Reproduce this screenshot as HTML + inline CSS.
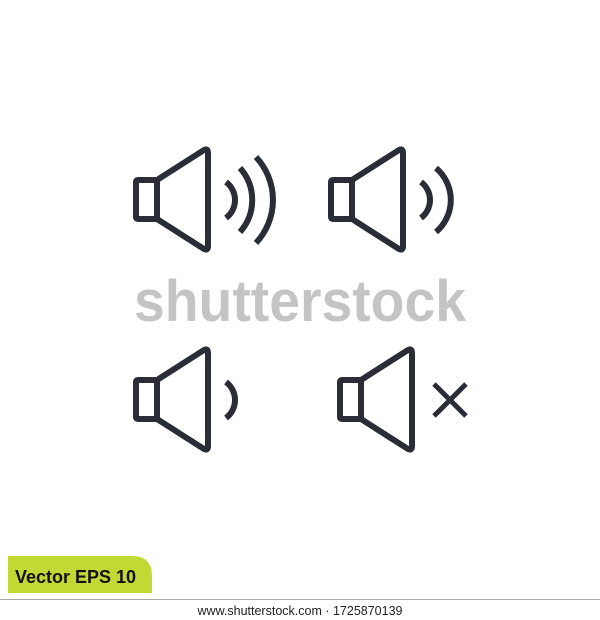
<!DOCTYPE html>
<html><head><style>
html,body{margin:0;padding:0;background:#fff;width:600px;height:620px;overflow:hidden;font-family:"Liberation Sans",sans-serif}
</style></head><body>
<svg width="600" height="620" viewBox="0 0 600 620" xmlns="http://www.w3.org/2000/svg" style="position:absolute;left:0;top:0">
<defs>
<g id="spk" fill="none" stroke="#2a2d36" stroke-width="6" stroke-linejoin="round" stroke-linecap="butt">
<path d="M157 180 H138 Q136 180 136 182 V217 Q136 219 138 219 H157 Z"/>
<path d="M157 180 L204 150 Q208 148 208 153 V246 Q208 251 204 249 L157 219 Z"/>
</g>
</defs>
<g fill="none" stroke="#2a2d36" stroke-width="6">
<use href="#spk"/>
<path d="M226 182 A22.5 22.5 0 0 1 226 218"/>
<path d="M240 168 A48 48 0 0 1 240 232"/>
<path d="M256 157 A63 63 0 0 1 256 243"/>
<use href="#spk" x="195"/>
<path d="M421 182 A22.5 22.5 0 0 1 421 218"/>
<path d="M436 168 A42 42 0 0 1 436 232"/>
<use href="#spk" y="200"/>
<path d="M226 382 A22.5 22.5 0 0 1 226 418"/>
<use href="#spk" x="204" y="200"/>
<path d="M434 384 L466 416 M466 384 L434 416" stroke-width="5"/>
</g>
<text x="134" y="321" font-family="Liberation Sans, sans-serif" font-weight="bold" font-size="58" fill="#c4c4c4" textLength="332" lengthAdjust="spacingAndGlyphs">shutterstock</text>
<path d="M8 556 H132 Q152 556 152 576 V593 H8 Z" fill="#c2d834"/>
<text x="15" y="583" font-family="Liberation Sans, sans-serif" font-weight="bold" font-size="18" fill="#111" textLength="121" lengthAdjust="spacingAndGlyphs">Vector EPS 10</text>
<rect x="0" y="599" width="600" height="1" fill="#aaa"/>
<text x="300" y="615" text-anchor="middle" font-family="Liberation Sans, sans-serif" font-size="12.5" fill="#222">www.shutterstock.com · 1725870139</text>
</svg>
</body></html>
